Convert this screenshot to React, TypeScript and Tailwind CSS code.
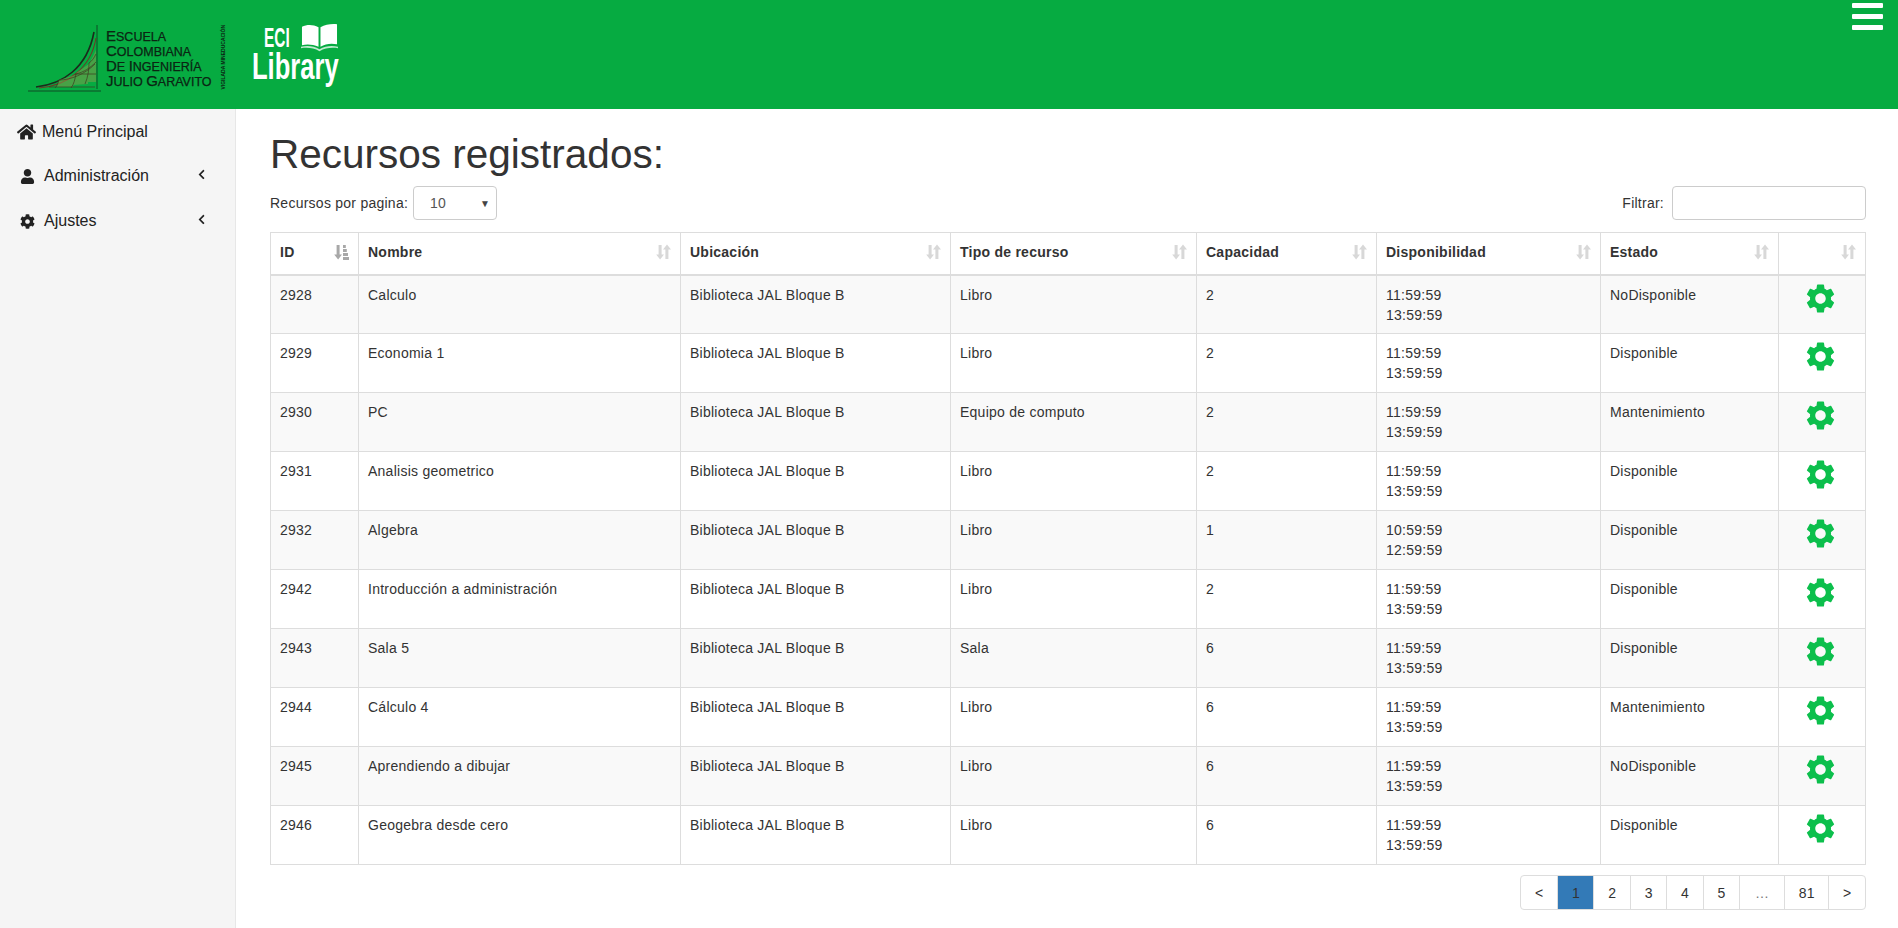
import React from 'react';
import { FaHome, FaUser, FaCog, FaChevronLeft } from 'react-icons/fa';
import { MdSettings } from 'react-icons/md';

const resources = [
  { id: 2928, name: 'Calculo', type: 'Libro', cap: 2, from: '11:59:59', to: '13:59:59', status: 'NoDisponible' },
  { id: 2929, name: 'Economia 1', type: 'Libro', cap: 2, from: '11:59:59', to: '13:59:59', status: 'Disponible' },
  { id: 2930, name: 'PC', type: 'Equipo de computo', cap: 2, from: '11:59:59', to: '13:59:59', status: 'Mantenimiento' },
  { id: 2931, name: 'Analisis geometrico', type: 'Libro', cap: 2, from: '11:59:59', to: '13:59:59', status: 'Disponible' },
  { id: 2932, name: 'Algebra', type: 'Libro', cap: 1, from: '10:59:59', to: '12:59:59', status: 'Disponible' },
  { id: 2942, name: 'Introducción a administración', type: 'Libro', cap: 2, from: '11:59:59', to: '13:59:59', status: 'Disponible' },
  { id: 2943, name: 'Sala 5', type: 'Sala', cap: 6, from: '11:59:59', to: '13:59:59', status: 'Disponible' },
  { id: 2944, name: 'Cálculo 4', type: 'Libro', cap: 6, from: '11:59:59', to: '13:59:59', status: 'Mantenimiento' },
  { id: 2945, name: 'Aprendiendo a dibujar', type: 'Libro', cap: 6, from: '11:59:59', to: '13:59:59', status: 'NoDisponible' },
  { id: 2946, name: 'Geogebra desde cero', type: 'Libro', cap: 6, from: '11:59:59', to: '13:59:59', status: 'Disponible' },
];

const columns = ['Nombre', 'Ubicación', 'Tipo de recurso', 'Capacidad', 'Disponibilidad', 'Estado', ''];
const pages = ['<', '1', '2', '3', '4', '5', '…', '81', '>'];
const logoLines = [
  ['E', 'SCUELA'],
  ['C', 'OLOMBIANA'],
  ['D', 'E ', 'I', 'NGENIERÍA'],
  ['J', 'ULIO ', 'G', 'ARAVITO'],
];

const SortIcon = () => (
  <svg width="15" height="16" viewBox="0 0 15 16" className="shrink-0 text-[#d8d8d8]" fill="currentColor">
    <path d="M2.600 1h3v9.500H8l-3.900 5L.2 10.500h2.400z" />
    <path d="M9.400 15h3V5.500H15L11 .5 7 5.500h2.400z" />
  </svg>
);

const SortActiveIcon = () => (
  <svg width="15" height="16" viewBox="0 0 15 16" className="shrink-0 text-[#a8a8a8]" fill="currentColor">
    <path d="M2.600 1h3v9.500H8l-3.900 5L.2 10.500h2.400z" />
    <path d="M9 1h2.800v3H9zM9 5h3.800v3H9zM9 9h5v3H9zM9 13h6v3H9z" />
  </svg>
);

const Swoosh = () => (
  <svg width="76" height="70" viewBox="0 0 76 70" fill="none" className="shrink-0">
    <path d="M1 67h73M70 1v64" stroke="#12361f" strokeWidth="0.8" />
    <path d="M9 63C35 60 60 45 67 8" stroke="#1b2a1c" strokeWidth="1.6" />
    <path d="M12 64C40 62 64 44 69 14" stroke="#6b3b26" strokeWidth="1.1" />
    <path d="M30 63l2-7 16-5-2 12zM46 61l3-12 13-9-1 20zM60 58l2-18 7-14v32z" fill="#7f9a4a" opacity="0.55" />
    <path d="M28 64c2-2 3-5 4-8 12 0 26-6 36-16M44 64c3-4 4-9 5-14 8-2 14-6 20-12M58 60c3-7 4-14 4-21 3-2 5-5 7-9M22 63h46M48 50h21" stroke="#3c3a20" strokeWidth="0.7" />
  </svg>
);

const BookIcon = () => (
  <svg width="37" height="29" viewBox="0 0 38 29" fill="#fff">
    <path d="M1 3.500C6 1 12 .8 18 4v20C12 21.500 6 21 1 22.500z" />
    <path d="M37 .8C31 .3 25 1 20 4v20c5-3 11-3.800 17-2.500z" />
    <path d="M0 24c6-1.500 13-1 19 2.500C25 23 32 22.500 38 24v1.500c-6-1-13-.5-19 3C13 25 6 24.500 0 25.500z" opacity="0.75" />
  </svg>
);

const Header = () => (
  <header className="h-[109px] bg-[#06ab41] flex justify-between items-start">
    <div className="flex items-start pl-[27px] pt-[24px]">
      <Swoosh />
      <div className="ml-[3px] pt-[4px] text-[#0b2413] w-[112px] whitespace-nowrap [-webkit-text-stroke:0.25px_#0b2413]">
        {logoLines.map((parts) => (
          <div key={parts.join('')} className="h-[15px] flex items-baseline leading-[15px] whitespace-pre">
            {parts.map((part, i) => (
              <span key={i} className={i % 2 === 0 ? 'text-[15px]' : 'text-[12.5px]'}>{part}</span>
            ))}
          </div>
        ))}
      </div>
      <div className="ml-[1px] w-[9px] h-[66px] flex items-center justify-center">
        <span className="[writing-mode:vertical-rl] rotate-180 whitespace-nowrap text-[5px] leading-none text-[#0b2413] font-bold">VIGILADA MINEDUCACIÓN</span>
      </div>
      <div className="ml-[24px] w-[87px] -mt-[1px] text-white">
        <div className="flex items-center justify-between pl-[12px] pr-[1px] h-[29px]">
          <span className="mt-[1px] w-[25px] text-[28px] leading-none font-bold scale-x-[0.55] origin-left">ECI</span>
          <BookIcon />
        </div>
        <div className="-mt-[4px] text-[36px] leading-[38px] font-bold scale-x-[0.71] origin-left whitespace-nowrap">Library</div>
      </div>
    </div>
    <div className="mt-[3px] mr-[15px] w-[31px] flex flex-col gap-[6px]">
      <div className="h-[5px] bg-white rounded-[1px]" />
      <div className="h-[5px] bg-white rounded-[1px]" />
      <div className="h-[5px] bg-white rounded-[1px]" />
    </div>
  </header>
);

const Sidebar = () => (
  <aside className="w-[236px] shrink-0 bg-[#f5f5f5] border-r border-[#e7e7e7] text-[16px] leading-[22px] text-[#222]">
    <div className="flex items-center pl-[17px] pt-[12px]">
      <FaHome className="text-[18px] w-[19px]" />
      <span className="ml-[6px]">Menú Principal</span>
    </div>
    <div className="flex items-center pl-[20px] pt-[22px]">
      <FaUser className="text-[15px] w-[15px]" />
      <span className="ml-[9px]">Administración</span>
      <FaChevronLeft className="ml-auto mr-[28px] -mt-[3px] text-[11px]" />
    </div>
    <div className="flex items-center pl-[20px] pt-[23px]">
      <FaCog className="text-[15px] w-[15px]" />
      <span className="ml-[9px]">Ajustes</span>
      <FaChevronLeft className="ml-auto mr-[28px] -mt-[3px] text-[11px]" />
    </div>
  </aside>
);

const ResourceTable = () => (
  <table className="w-[1595px] table-fixed border-collapse text-[14px] leading-[20px] tracking-[0.25px] text-[#333]">
    <colgroup>
      <col className="w-[88px]" />
      <col className="w-[322px]" />
      <col className="w-[270px]" />
      <col className="w-[246px]" />
      <col className="w-[180px]" />
      <col className="w-[224px]" />
      <col className="w-[178px]" />
      <col className="w-[87px]" />
    </colgroup>
    <thead>
      <tr className="h-[42px] border-b-2 border-[#ddd]">
        <th className="border border-b-2 border-[#ddd] pl-[9px] pr-[9px] text-left font-bold">
          <div className="flex items-center justify-between -mt-[3px]">
            ID <SortActiveIcon />
          </div>
        </th>
        {columns.map((col) => (
          <th key={col || 'acciones'} className="border border-b-2 border-[#ddd] pl-[9px] pr-[9px] text-left font-bold">
            <div className="flex items-center justify-between -mt-[3px]">
              <span>{col}</span>
              <SortIcon />
            </div>
          </th>
        ))}
      </tr>
    </thead>
    <tbody>
      {resources.map((r, i) => (
        <tr key={r.id} className={i % 2 === 0 ? 'h-[59px] bg-[#f9f9f9]' : 'h-[59px] bg-white'}>
          <td className="border border-[#ddd] pl-[9px] pr-[8px] pt-[9px] pb-[8px] align-top">{r.id}</td>
          <td className="border border-[#ddd] pl-[9px] pr-[8px] pt-[9px] pb-[8px] align-top">{r.name}</td>
          <td className="border border-[#ddd] pl-[9px] pr-[8px] pt-[9px] pb-[8px] align-top">Biblioteca JAL Bloque B</td>
          <td className="border border-[#ddd] pl-[9px] pr-[8px] pt-[9px] pb-[8px] align-top">{r.type}</td>
          <td className="border border-[#ddd] pl-[9px] pr-[8px] pt-[9px] pb-[8px] align-top">{r.cap}</td>
          <td className="border border-[#ddd] pl-[9px] pr-[8px] pt-[9px] pb-[8px] align-top">
            <div>{r.from}</div>
            <div>{r.to}</div>
          </td>
          <td className="border border-[#ddd] pl-[9px] pr-[8px] pt-[9px] pb-[8px] align-top">{r.status}</td>
          <td className="border border-[#ddd] align-top pt-[5px] pr-[3px]">
            <div className="flex justify-center">
              <MdSettings className="text-[35px] text-[#0cbf4c]" />
            </div>
          </td>
        </tr>
      ))}
    </tbody>
  </table>
);

const Pagination = () => (
  <div className="mt-[10px] flex justify-end">
    <div className="flex rounded-[4px] border border-[#ddd] text-[14px] leading-[20px] text-[#333]">
      {pages.map((p, i) => (
        <span
          key={p}
          className={[
            'py-[6.5px]',
            i > 0 ? 'border-l border-[#ddd]' : '',
            p === '1' ? 'bg-[#337ab7] border-[#337ab7]' : '',
            p === '…' ? 'text-[#777] px-[15px]' : 'px-[13.8px]',
          ].join(' ')}
        >
          {p}
        </span>
      ))}
    </div>
  </div>
);

export default function App() {
  return (
    <div className="min-h-[928px] flex flex-col bg-white font-['Liberation_Sans',Arial,sans-serif] text-[#333]">
      <Header />
      <div className="flex flex-1">
        <Sidebar />
        <main className="pl-[34px] pt-[22px]">
          <h1 className="text-[40.5px] leading-[46px] font-normal text-[#333]">Recursos registrados:</h1>
          <div className="mt-[9px] flex items-center justify-between text-[14px] tracking-[0.25px]">
            <div className="flex items-center">
              <span>Recursos por pagina:</span>
              <div className="ml-[5px] w-[84px] h-[34px] rounded-[4px] border border-[#ccc] flex items-center justify-between pl-[16px] pr-[6px] text-[#555]">
                <span>10</span>
                <span className="text-[10px] text-[#444]">▼</span>
              </div>
            </div>
            <div className="flex items-center">
              <span>Filtrar:</span>
              <input className="ml-[8px] w-[194px] h-[34px] rounded-[4px] border border-[#ccc] bg-white" />
            </div>
          </div>
          <div className="mt-[12px]">
            <ResourceTable />
          </div>
          <Pagination />
        </main>
      </div>
    </div>
  );
}
